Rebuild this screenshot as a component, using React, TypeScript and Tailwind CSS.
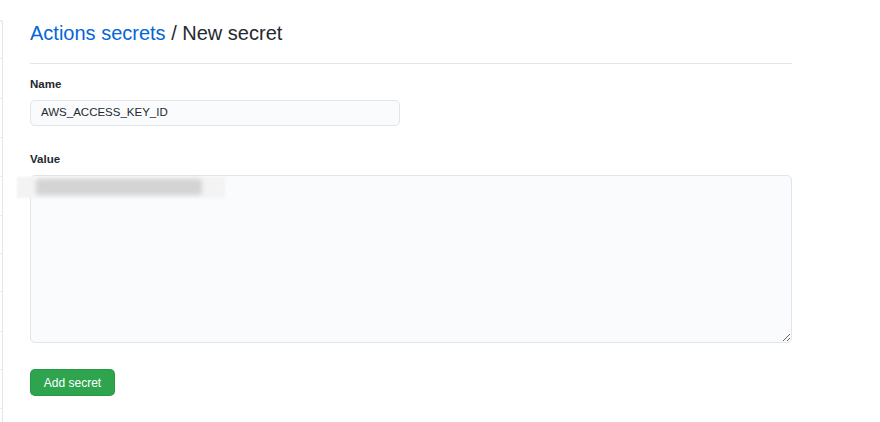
import React from 'react';

const sideRows = [38, 40, 39, 39, 39, 38, 38, 40, 38, 39, 39];

const Sidebar = () => {
  return (
    <div className="mt-[20px] w-[3px] shrink-0 overflow-hidden rounded-tr-[5px] border-r border-t border-[#e1e4e8]">
      {sideRows.map((h, i) => (
        <div key={i} className="border-b border-[#eaecef]" style={{ height: h }} />
      ))}
    </div>
  );
};

const App = () => {
  return (
    <div
      className="flex h-[422px] w-[880px] overflow-hidden bg-white text-[#24292e]"
      style={{ fontFamily: '"Liberation Sans", Arial, sans-serif' }}
    >
      <Sidebar />
      <div className="ml-[27px] w-[762px]">
        <div className="border-b border-[#e1e4e8] pt-[18px] pb-[15px] text-[20px] leading-[30px]">
          <a className="text-[#0366d6]">Actions secrets</a>
          <span> / New secret</span>
        </div>

        <div className="mt-[12px] text-[11.5px] font-bold leading-[16px]">Name</div>
        <div className="mt-[8px] flex h-[26px] w-[370px] items-center rounded-[5px] border border-[#e1e4e8] bg-[#fafbfc] pl-[10px] text-[11.5px]">
          AWS_ACCESS_KEY_ID
        </div>

        <div className="mt-[25px] text-[11.5px] font-bold leading-[16px]">Value</div>
        <div className="relative mt-[8px]">
          <textarea
            readOnly
            className="block h-[168px] w-[762px] resize-y rounded-[5px] border border-[#e1e4e8] bg-[#fafbfc] outline-none"
          />
          {/* blurred-out secret value */}
          <div className="pointer-events-none absolute left-[-13px] top-[2px] h-[21px] w-[208px] bg-[#f3f3f3] blur-[1px]" />
          <div className="pointer-events-none absolute left-[6px] top-[4px] h-[16px] w-[166px] rounded-sm bg-[#d4d4d4] blur-[2px]" />
        </div>

        <button className="mt-[26px] flex h-[27px] w-[85px] items-center justify-center rounded-[5px] border border-[#22863a]/40 bg-[#2ea44f] text-[12px] text-white">
          Add secret
        </button>
      </div>
    </div>
  );
};

export default App;
